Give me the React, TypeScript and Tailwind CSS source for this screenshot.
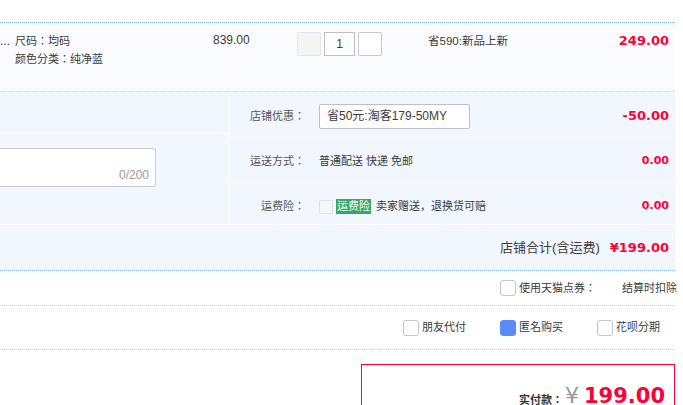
import React from 'react';

const num = "font-['DejaVu_Sans','Noto_Sans_CJK_JP',sans-serif] font-bold text-[#ff0036]";

function Box({ checked }: { checked?: boolean }) {
  return (
    <span
      className={`inline-block w-4 h-4 shrink-0 rounded-[3px] border ${
        checked ? 'bg-[#5b8cff] border-[#5b8cff]' : 'bg-white border-[#c4c6d0]'
      }`}
    />
  );
}

function FeeRow({ label, h, children, amount, amountClass }: {
  label: string;
  h: string;
  children: React.ReactNode;
  amount: string;
  amountClass: string;
}) {
  return (
    <div className={`flex items-center ${h}`}>
      <div className="w-[76px] text-right text-[#555]">{label}</div>
      <div className="ml-[14px] flex-1 flex items-center">{children}</div>
      <div className={`pr-[6px] ${num} ${amountClass}`}>{amount}</div>
    </div>
  );
}

export default function App() {
  return (
    <div className="w-[683px] h-[405px] overflow-hidden bg-white text-[11px] text-[#3c3c3c] font-['Liberation_Sans','Noto_Sans_CJK_JP',sans-serif]">
      <div className="w-[675px]">
        <div className="h-[22px]" />

        {/* item row */}
        <div className="h-[70px] border-t border-b border-dotted border-t-[#7fb0ff] border-b-[#cfd3da] bg-[#fbfcff] flex items-start pt-[9px] leading-[18px]">
          <div className="w-[15px] text-[12px]">...</div>
          <div className="w-[198px]">
            <div>尺码：均码</div>
            <div>颜色分类：纯净蓝</div>
          </div>
          <div className="w-[84px] -mt-[1px] text-[12px]">839.00</div>
          <div className="w-[131px] flex gap-[3px]">
            <span className="w-6 h-6 rounded-[2px] border border-[#e2e4ea] bg-[#f5f5f5]" />
            <span className="w-[31px] h-6 border border-[#bcc0cb] bg-white flex items-center justify-center text-[12px]">1</span>
            <span className="w-6 h-6 rounded-[2px] border border-[#c6c9d2] bg-white" />
          </div>
          <div className="flex-1 text-[11.5px]">省590:新品上新</div>
          <div className={`pr-[6px] text-[13px] ${num}`}>249.00</div>
        </div>

        {/* shop section */}
        <div className="flex bg-[#f2f7ff] border-b border-white">
          <div className="w-[229px] border-r border-white">
            <div className="h-[42px] border-b border-white" />
            <div className="pt-[14px] pr-[72px]">
              <div className="h-[39px] bg-white border border-l-0 border-[#cccccc] rounded-r-[3px] flex items-end justify-end pr-[6px] pb-[2px] text-[12px] text-[#999]">
                0/200
              </div>
            </div>
          </div>
          <div className="flex-1">
            <FeeRow label="店铺优惠：" h="h-[46px] pt-[3px] border-b border-white" amount="-50.00" amountClass="text-[13px]">
              <div className="w-[151px] h-[25px] bg-white border border-[#b9bfcc] rounded-[2px] flex items-center pl-[7px] text-[12px]">
                省50元:淘客179-50MY
              </div>
            </FeeRow>
            <FeeRow label="运送方式：" h="h-[45px] pt-[2px] border-b border-white" amount="0.00" amountClass="text-[11px]">
              <span>普通配送 快递 免邮</span>
            </FeeRow>
            <FeeRow label="运费险：" h="h-[41px] pt-[6px]" amount="0.00" amountClass="text-[11px]">
              <span className="w-[14px] h-[14px] rounded-[2px] border border-[#e0e2e8] bg-[#f7f7f9]" />
              <span className="ml-[3px] px-[1px] bg-[#35a862] text-white leading-[15px] text-[11px]">运费险</span>
              <span className="ml-[5px]">卖家赠送，退换货可赔</span>
            </FeeRow>
          </div>
        </div>

        {/* shop total */}
        <div className="h-[46px] bg-[#f2f7ff] border-b border-dotted border-[#7fb0ff] flex items-center justify-end pr-[6px]">
          <span className="text-[13px]">店铺合计(含运费)</span>
          <span className={`ml-[10px] text-[13px] ${num}`}>¥199.00</span>
        </div>

        <div className="h-[35px] border-b border-dotted border-[#cfd3da] flex items-center pl-[500px] whitespace-nowrap">
          <Box />
          <span className="ml-[3px]">使用天猫点券：</span>
          <span className="ml-[26px]">结算时扣除</span>
        </div>

        <div className="h-[44px] border-b border-dotted border-[#cfd3da] flex items-center pl-[403px] whitespace-nowrap">
          <div className="w-[97px] flex items-center gap-[3px]"><Box /><span>朋友代付</span></div>
          <div className="w-[97px] flex items-center gap-[3px]"><Box checked /><span>匿名购买</span></div>
          <div className="flex items-center gap-[3px]"><Box /><span>花呗分期</span></div>
        </div>

        <div className="pt-[14px] pl-[361px]">
          <div className="h-[60px] border border-[#ff0036] flex items-start justify-end pr-[9px] pt-[17px] whitespace-nowrap">
            <span className="mt-[10px] font-bold text-[#333]">实付款：</span>
            <span className="ml-[2px] text-[22px] leading-[28px] text-[#999] font-['DejaVu_Sans',sans-serif]">¥</span>
            <span className={`ml-[5px] text-[21px] leading-[28px] ${num}`}>199.00</span>
          </div>
        </div>
      </div>
    </div>
  );
}
